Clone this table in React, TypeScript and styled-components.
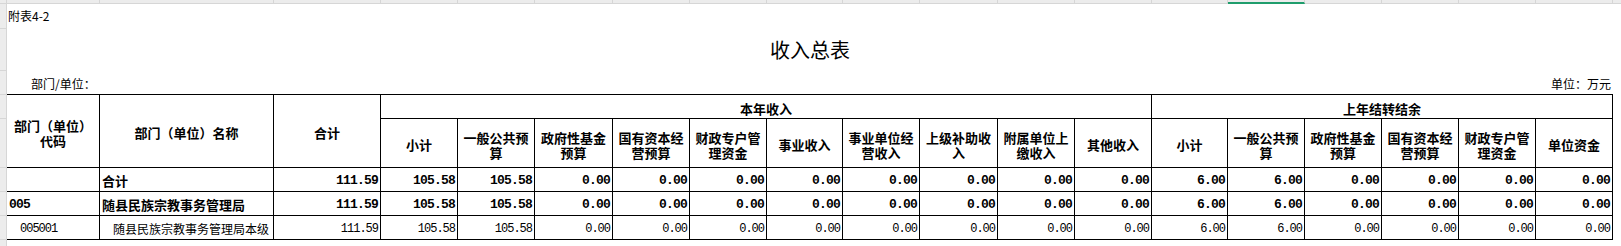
import React from 'react';
import styled, { createGlobalStyle } from 'styled-components';

const COLS = [93, 174, 107, 77, 77, 78, 77, 77, 76, 77, 78, 77, 77, 76, 77, 77, 77, 77, 77];
const ACTIVE_COL = 14;
const ROW_SEGMENTS = [25, 42, 24, 24, 49, 24, 24, 24];

const GlobalStyle = createGlobalStyle`
  html, body { margin: 0; padding: 0; background: #ffffff; }
  body { font-family: "Noto Sans CJK SC", "Liberation Sans", sans-serif; color: #000; }
  * { box-sizing: border-box; }
`;

const Sheet = styled.div`
  display: grid;
  grid-template-columns: 7px 1fr;
  grid-template-rows: 4px 1fr;
  width: 1621px;
  height: 246px;
  overflow: hidden;
  background: #fff;
`;

const Corner = styled.div`
  background: #ececec;
  border-right: 1px solid #d6d6d6;
  border-bottom: 1px solid #d6d6d6;
`;

const ColStrip = styled.div`
  display: flex;
  height: 4px;
  background: #ececec;
`;

const ColMark = styled.div<{ $w: number; $active?: boolean }>`
  flex: 0 0 ${(p) => p.$w}px;
  height: 4px;
  border-right: 1px solid #d6d6d6;
  border-bottom: ${(p) => (p.$active ? '2px solid #1f9d6c' : '1px solid #d6d6d6')};
`;

const ColFill = styled.div`
  flex: 1;
  border-bottom: 1px solid #d6d6d6;
`;

const RowStrip = styled.div`
  display: flex;
  flex-direction: column;
  background: #ececec;
  border-right: 1px solid #d6d6d6;
`;

const RowMark = styled.div<{ $h: number }>`
  flex: 0 0 ${(p) => p.$h}px;
  border-bottom: 1px solid #d6d6d6;
`;

const Content = styled.div`
  display: flex;
  flex-direction: column;
  width: 1606px;
`;

const Note = styled.div`
  height: 25px;
  padding: 5px 0 0 1px;
  font-size: 12px;
  line-height: 14px;
`;

const Title = styled.h1`
  margin: 0;
  height: 42px;
  padding-top: 9px;
  text-align: center;
  font-size: 20px;
  line-height: 24px;
  font-weight: 400;
`;

const UnitRow = styled.div`
  height: 23px;
  display: flex;
  justify-content: space-between;
  align-items: flex-start;
  padding: 6px 2px 0 24px;
  font-size: 12px;
  line-height: 14px;
`;

const Table = styled.div`
  display: grid;
  grid-template-columns: ${COLS.map((w) => `${w}px`).join(' ')};
  grid-template-rows: 24px 49px 24px 24px 24px;
  border-top: 1px solid #000;
`;

const HeadCell = styled.div<{ $col: string; $row: string }>`
  grid-column: ${(p) => p.$col};
  grid-row: ${(p) => p.$row};
  display: flex;
  align-items: center;
  justify-content: center;
  text-align: center;
  padding: 3px 1px 0;
  border-right: 1px solid #000;
  border-bottom: 1px solid #000;
  font-size: 13px;
  line-height: 15px;
  font-weight: 700;
`;

const Cell = styled.div<{ $num?: boolean; $bold?: boolean; $indent?: number }>`
  display: flex;
  align-items: center;
  justify-content: ${(p) => (p.$num ? 'flex-end' : 'flex-start')};
  padding: 3px 2px 0 ${(p) => 2 + (p.$indent ?? 0)}px;
  border-right: 1px solid #000;
  border-bottom: 1px solid #000;
  white-space: nowrap;
  overflow: hidden;
  font-weight: ${(p) => (p.$bold ? 700 : 400)};
  font-size: ${(p) => (p.$bold ? 13 : 12)}px;
  line-height: 16px;
`;

const NumText = styled.span<{ $bold?: boolean }>`
  font-family: "Liberation Mono", "DejaVu Sans Mono", monospace;
  font-size: ${(p) => (p.$bold ? 13 : 12)}px;
  letter-spacing: ${(p) => (p.$bold ? -0.8 : -1)}px;
`;

const currentHeads = [
  '小计',
  '一般公共预算',
  '政府性基金预算',
  '国有资本经营预算',
  '财政专户管理资金',
  '事业收入',
  '事业单位经营收入',
  '上级补助收入',
  '附属单位上缴收入',
  '其他收入',
];
const priorHeads = ['小计', '一般公共预算', '政府性基金预算', '国有资本经营预算', '财政专户管理资金', '单位资金'];

const values = [
  '111.59',
  '105.58',
  '105.58',
  '0.00',
  '0.00',
  '0.00',
  '0.00',
  '0.00',
  '0.00',
  '0.00',
  '0.00',
  '6.00',
  '6.00',
  '0.00',
  '0.00',
  '0.00',
  '0.00',
];

const rows = [
  { code: '', name: '合计', bold: true, codeIndent: 0, nameIndent: 0 },
  { code: '005', name: '随县民族宗教事务管理局', bold: true, codeIndent: 0, nameIndent: 0 },
  { code: '005001', name: '随县民族宗教事务管理局本级', bold: false, codeIndent: 11, nameIndent: 11 },
];

export default function App() {
  return (
    <>
      <GlobalStyle />
      <Sheet>
        <Corner />
        <ColStrip>
          {COLS.map((w, i) => (
            <ColMark key={i} $w={w} $active={i === ACTIVE_COL} />
          ))}
          <ColFill />
        </ColStrip>
        <RowStrip>
          {ROW_SEGMENTS.map((h, i) => (
            <RowMark key={i} $h={h} />
          ))}
        </RowStrip>
        <Content>
          <Note>附表4-2</Note>
          <Title>收入总表</Title>
          <UnitRow>
            <span>部门/单位：</span>
            <span>单位：万元</span>
          </UnitRow>
          <Table>
            <HeadCell $col="1" $row="1 / span 2">
              部门（单位）
              <br />
              代码
            </HeadCell>
            <HeadCell $col="2" $row="1 / span 2">
              部门（单位）名称
            </HeadCell>
            <HeadCell $col="3" $row="1 / span 2">
              合计
            </HeadCell>
            <HeadCell $col="4 / span 10" $row="1">
              本年收入
            </HeadCell>
            <HeadCell $col="14 / span 6" $row="1">
              上年结转结余
            </HeadCell>
            {currentHeads.map((h, i) => (
              <HeadCell key={`c${i}`} $col={`${4 + i}`} $row="2">
                {h}
              </HeadCell>
            ))}
            {priorHeads.map((h, i) => (
              <HeadCell key={`p${i}`} $col={`${14 + i}`} $row="2">
                {h}
              </HeadCell>
            ))}
            {rows.map((r, ri) => (
              <React.Fragment key={ri}>
                <Cell $bold={r.bold} $indent={r.codeIndent}>
                  <NumText $bold={r.bold}>{r.code}</NumText>
                </Cell>
                <Cell $bold={r.bold} $indent={r.nameIndent}>
                  {r.name}
                </Cell>
                {values.map((v, vi) => (
                  <Cell key={vi} $num $bold={r.bold}>
                    <NumText $bold={r.bold}>{v}</NumText>
                  </Cell>
                ))}
              </React.Fragment>
            ))}
          </Table>
        </Content>
      </Sheet>
    </>
  );
}
